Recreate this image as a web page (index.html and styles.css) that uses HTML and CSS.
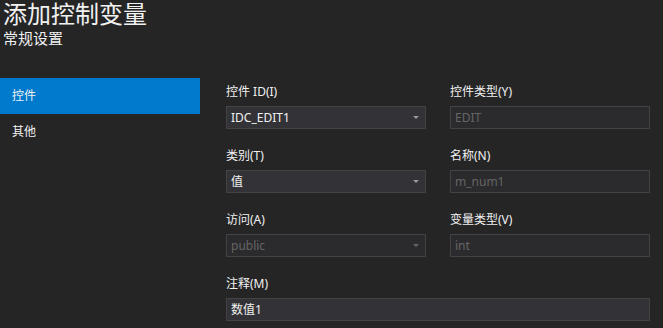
FILE: index.html
```html
<!DOCTYPE html>
<html lang="zh-CN">
<head>
    <meta charset="UTF-8">
    <title>添加控制变量</title>
    <link rel="stylesheet" href="styles.css">
</head>
<body>
    <div class="header">
        <h1>添加控制变量</h1>
        <h2>常规设置</h2>
    </div>

    <div class="main">
        <ul class="nav">
            <li class="active">控件</li>
            <li>其他</li>
        </ul>

        <div class="form">
            <div class="field">
                <label>控件 ID(I)</label>
                <div class="box combo">IDC_EDIT1<span class="arrow"></span></div>
            </div>
            <div class="field">
                <label>控件类型(Y)</label>
                <div class="box disabled">EDIT</div>
            </div>
            <div class="field">
                <label>类别(T)</label>
                <div class="box combo">值<span class="arrow"></span></div>
            </div>
            <div class="field">
                <label>名称(N)</label>
                <div class="box disabled">m_num1</div>
            </div>
            <div class="field">
                <label>访问(A)</label>
                <div class="box combo disabled">public<span class="arrow"></span></div>
            </div>
            <div class="field">
                <label>变量类型(V)</label>
                <div class="box disabled">int</div>
            </div>
            <div class="field wide">
                <label>注释(M)</label>
                <div class="box">数值1</div>
            </div>
        </div>
    </div>
</body>
</html>
```

FILE: styles.css
```css
body {
    margin: 0;
    background: #252526;
    color: #f1f1f1;
    font-family: "Noto Sans", "Noto Sans CJK SC", sans-serif;
    height: 328px;
    overflow: hidden;
}
.header {
    padding-left: 3px;
}
h1 {
    margin: 0;
    font-size: 24px;
    line-height: 28px;
    font-weight: normal;
}
h2 {
    margin: 0;
    font-size: 15px;
    line-height: 20px;
    font-weight: normal;
}
.main {
    display: flex;
    margin-top: 30px;
}
.nav {
    list-style: none;
    margin: 0;
    padding: 0;
    width: 200px;
}
.nav li {
    height: 36px;
    line-height: 36px;
    padding-left: 12px;
    font-size: 12px;
}
.nav li.active {
    background: #007acc;
}
.form {
    display: grid;
    grid-template-columns: 200px 200px;
    column-gap: 24px;
    row-gap: 17px;
    margin-left: 26px;
    padding-top: 4px;
}
.field.wide {
    grid-column: span 2;
}
label {
    display: block;
    font-size: 12px;
    line-height: 20px;
    margin-bottom: 4px;
}
.box {
    position: relative;
    box-sizing: border-box;
    height: 23px;
    line-height: 21px;
    padding-left: 4px;
    font-size: 12px;
    background: #333337;
    border: 1px solid #434346;
}
.box.disabled {
    background: #2b2b2d;
    color: #656565;
}
.arrow {
    position: absolute;
    right: 6px;
    top: 9px;
    border-left: 3px solid transparent;
    border-right: 3px solid transparent;
    border-top: 3px solid #999999;
}
.disabled .arrow {
    border-top-color: #656565;
}
```
